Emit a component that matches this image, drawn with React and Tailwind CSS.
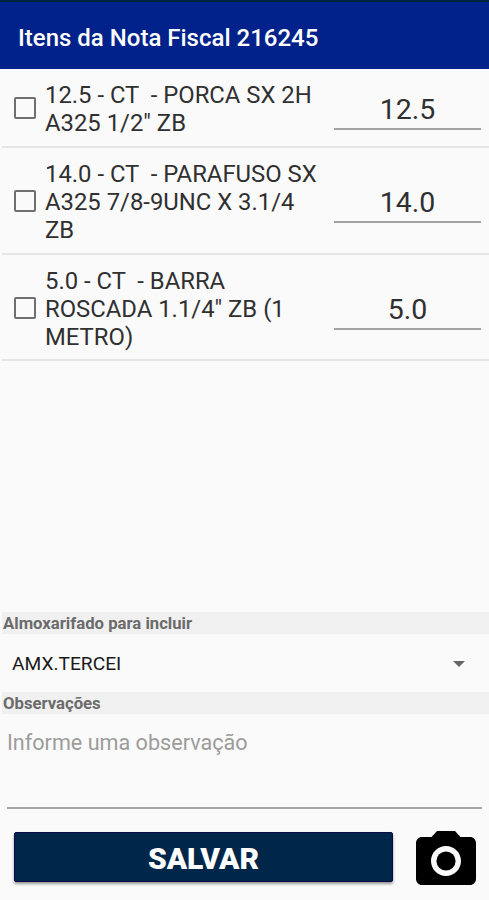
import React, { useState } from 'react'
import { MdCameraAlt } from 'react-icons/md'

const ITEMS = [
  { id: 1, lines: ['12.5 - CT  - PORCA SX 2H', 'A325 1/2" ZB'], quantity: '12.5' },
  { id: 2, lines: ['14.0 - CT  - PARAFUSO SX', 'A325 7/8-9UNC X 3.1/4', 'ZB'], quantity: '14.0' },
  { id: 3, lines: ['5.0 - CT  - BARRA', 'ROSCADA 1.1/4" ZB (1', 'METRO)'], quantity: '5.0' },
]

function ItemRow({ item, checked, onToggle, quantity, onQuantity }) {
  return (
    <li className="flex items-center border-b-2 border-[#e6e6e6] pb-[9px] pt-[12px] last:pb-[8px]">
      <button
        type="button"
        role="checkbox"
        aria-checked={checked}
        onClick={onToggle}
        className={`-mt-[2px] ml-3 h-[22px] w-[22px] shrink-0 rounded-[2px] border-2 border-[#6f6f6f] ${checked ? 'bg-[#00228a]' : ''}`}
      />
      <div className="ml-[9px] w-[284px] shrink-0 whitespace-pre text-[23.85px] leading-[28px] text-[#303030]">
        {item.lines.map((line) => (
          <p key={line}>{line}</p>
        ))}
      </div>
      <input
        className="ml-[5px] h-[42px] w-[147px] border-b-2 border-[#a3a3a3] bg-transparent pt-[5px] text-center text-[28.5px] text-[#303030] outline-none"
        value={quantity}
        onChange={(event) => onQuantity(event.target.value)}
      />
    </li>
  )
}

function SectionLabel({ children }) {
  return (
    <h2 className="ml-[2px] h-[22px] bg-[#f0f0f0] pl-px text-[16.7px] font-bold leading-[23px] text-[#6b6b6b]">
      {children}
    </h2>
  )
}

export default function App() {
  const [checked, setChecked] = useState({})
  const [quantities, setQuantities] = useState(ITEMS.map((item) => item.quantity))
  const [note, setNote] = useState('')

  return (
    <div className="flex h-[900px] w-full flex-col overflow-hidden bg-[#fafafa] font-['Roboto',sans-serif]">
      <header className="flex h-[69px] shrink-0 items-center border-t-2 border-[#00243f] bg-[#00228a] pl-[18px] pt-[4px]">
        <h1 className="text-2xl font-medium text-white">Itens da Nota Fiscal 216245</h1>
      </header>

      <ul className="ml-[2px] flex-1">
        {ITEMS.map((item, index) => (
          <ItemRow
            key={item.id}
            item={item}
            checked={!!checked[item.id]}
            onToggle={() => setChecked((current) => ({ ...current, [item.id]: !current[item.id] }))}
            quantity={quantities[index]}
            onQuantity={(value) => setQuantities((current) => current.map((q, i) => (i === index ? value : q)))}
          />
        ))}
      </ul>

      <SectionLabel>Almoxarifado para incluir</SectionLabel>
      <button type="button" className="flex h-[58px] shrink-0 items-center justify-between pl-3 pr-6 pt-[2px] text-left">
        <span className="text-[19.2px] text-[#1a1a1a]">AMX.TERCEI</span>
        <svg width="12" height="6" viewBox="0 0 12 6" fill="#666666">
          <path d="M0 0h12L6 6z" />
        </svg>
      </button>
      <SectionLabel>Observações</SectionLabel>
      <textarea
        className="mx-[7px] h-[95px] shrink-0 resize-none border-b-2 border-[#a6a6a6] bg-transparent pt-[15px] text-[21.6px] leading-[28px] text-[#303030] outline-none placeholder:text-[#9c9c9c]"
        placeholder="Informe uma observação"
        value={note}
        onChange={(event) => setNote(event.target.value)}
      />

      <div className="flex h-[91px] shrink-0 items-start pl-[14px] pt-[15px]">
        <button
          type="button"
          className="mt-[8px] h-[50px] w-[379px] rounded-[2px] border border-[#0b0b48] bg-[#002649] pt-[3px] text-[30px] font-black leading-none text-white shadow-[0_2px_3px_rgba(0,0,0,0.4)]"
        >
          SALVAR
        </button>
        <button type="button" aria-label="Câmera" className="ml-[17px] mt-px">
          <MdCameraAlt className="h-[72px] w-[72px] text-black" />
        </button>
      </div>
    </div>
  )
}
